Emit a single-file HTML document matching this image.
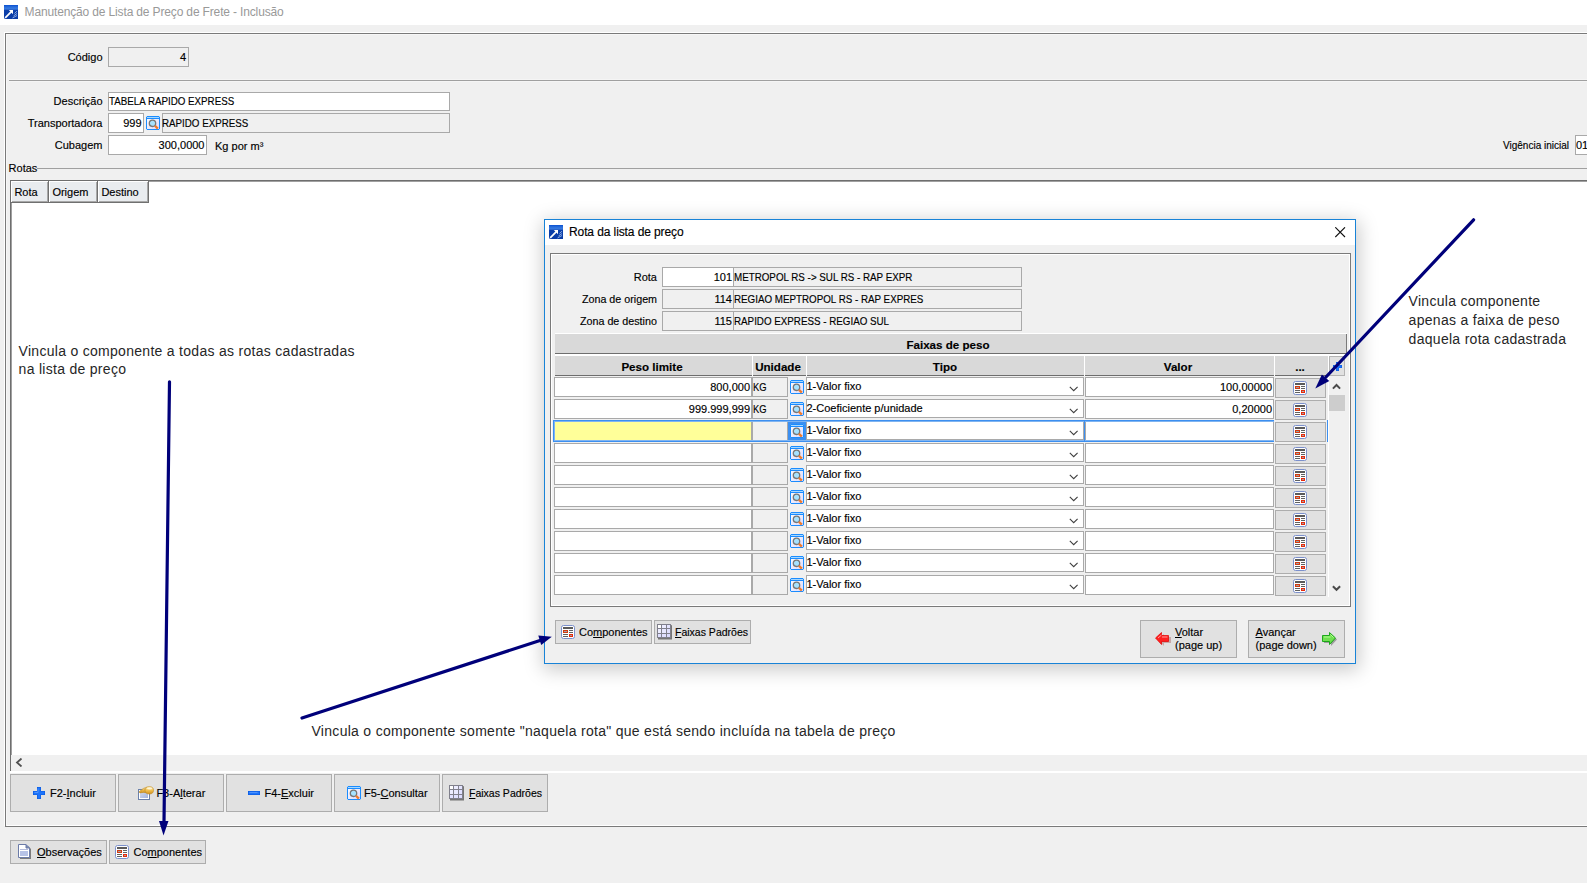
<!DOCTYPE html><html><head><meta charset="utf-8"><style>
html,body{margin:0;padding:0;}
body{width:1587px;height:883px;overflow:hidden;position:relative;background:#f0f0f0;font-family:"Liberation Sans",sans-serif;color:#000;}
div,svg{position:absolute;}
.t{white-space:pre;line-height:1;-webkit-text-stroke:0.15px currentColor;}
u{text-decoration:underline;text-underline-offset:1px;}
</style></head><body>
<div style="left:0px;top:0px;width:1587px;height:25px;background:#fff"></div>
<svg style="left:4px;top:5px" width="14" height="14" viewBox="0 0 14 14">
<defs><linearGradient id="ag1" x1="0" y1="0" x2="0" y2="1"><stop offset="0" stop-color="#0a4fd0"/><stop offset="0.15" stop-color="#2a6fdc"/><stop offset="0.3" stop-color="#3a7ae0"/><stop offset="0.36" stop-color="#0b3faa"/><stop offset="1" stop-color="#0a3ca6"/></linearGradient></defs>
<path d="M0 0 H14 V14 H1 L0 13 Z" fill="url(#ag1)"/>
<path d="M1.2 12.8 L7.6 6.4" stroke="#fff" stroke-width="1.7" fill="none"/>
<path d="M4.8 5 H9 V9.2 Z" fill="#fff"/>
<path d="M10.5 8.5 L13 6.2 M9.5 11 L13 8.5 M8.5 13 L13 10.5" stroke="#a8c4f0" stroke-width="0.9" fill="none" opacity="0.9"/>
</svg>
<div class="t" style="left:24.6px;top:5.84px;font-size:12px;color:#999;letter-spacing:-0.15px;-webkit-text-stroke:0">Manutenção de Lista de Preço de Frete - Inclusão</div>
<div style="left:5px;top:33px;width:1600px;height:794px;border:1px solid #7a7a7a;border-right:none;box-sizing:border-box;box-shadow:-1px -1px 0 #fff, inset 1px 1px 0 #f7f7f7, inset 0 -1px 0 #fff"></div>
<div class="t" style="right:1484.5px;top:51.69px;font-size:11px;">Código</div>
<div style="left:108px;top:47px;width:81px;height:20px;background:#f0f0f0;border:1px solid #a9a9a9;box-sizing:border-box"></div>
<div class="t" style="right:1401px;top:51.69px;font-size:11px;">4</div>
<div style="left:9px;top:80px;width:1600px;height:1px;background:#a0a0a0"></div>
<div style="left:9px;top:79px;width:1600px;height:1px;background:#f5f5f5"></div>
<div style="left:9px;top:81px;width:1600px;height:1px;background:#f5f5f5"></div>
<div class="t" style="right:1484.5px;top:95.69px;font-size:11px;">Descrição</div>
<div style="left:108px;top:92px;width:342px;height:19px;background:#fff;border:1px solid #a9a9a9;box-sizing:border-box"></div>
<div class="t" style="left:109px;top:95.69px;font-size:11px;;transform:scaleX(0.888);transform-origin:0 0">TABELA RAPIDO EXPRESS</div>
<div class="t" style="right:1484.5px;top:117.69px;font-size:11px;">Transportadora</div>
<div style="left:108px;top:113px;width:36px;height:20px;background:#fff;border:1px solid #a9a9a9;box-sizing:border-box"></div>
<div class="t" style="right:1445.5px;top:117.69px;font-size:11px;">999</div>
<svg style="left:146px;top:116px" width="14" height="14" viewBox="0 0 14 14">
<defs><linearGradient id="sg2" x1="0" y1="0" x2="1" y2="1"><stop offset="0" stop-color="#ffffff"/><stop offset="1" stop-color="#dcd8fa"/></linearGradient></defs>
<path d="M1 0.5 H13 L13.5 1 V13 L13 13.5 H1 L0.5 13 V1 Z" fill="url(#sg2)" stroke="#1a8cff" stroke-width="1"/>
<rect x="1" y="1" width="12" height="1" fill="#a8d8ff"/>
<rect x="1" y="2" width="12" height="1" fill="#1a8cff"/>
<circle cx="6.5" cy="7.3" r="3.2" fill="#a6e2ff" stroke="#777" stroke-width="1.3"/>
<path d="M9 9.8 L11.8 12.6" stroke="#f07a28" stroke-width="2.3"/>
</svg>
<div style="left:162px;top:113px;width:288px;height:20px;background:#f0f0f0;border:1px solid #a9a9a9;box-sizing:border-box"></div>
<div class="t" style="left:162px;top:117.69px;font-size:11px;;transform:scaleX(0.888);transform-origin:0 0">RAPIDO EXPRESS</div>
<div class="t" style="right:1484.5px;top:139.69px;font-size:11px;">Cubagem</div>
<div style="left:108px;top:135px;width:99px;height:20px;background:#fff;border:1px solid #a9a9a9;box-sizing:border-box"></div>
<div class="t" style="right:1382.5px;top:139.69px;font-size:11px;">300,0000</div>
<div class="t" style="left:215px;top:140.69px;font-size:11px;">Kg por m³</div>
<div class="t" style="left:1503px;top:139.69px;font-size:11px;;transform:scaleX(0.91);transform-origin:0 0">Vigência inicial</div>
<div style="left:1575px;top:135px;width:20px;height:20px;background:#fff;border:1px solid #a9a9a9;box-sizing:border-box"></div>
<div class="t" style="left:1576px;top:139.69px;font-size:11px;">01</div>
<div class="t" style="left:8.6px;top:162.69px;font-size:11px;">Rotas</div>
<div style="left:37px;top:168px;width:1600px;height:1px;background:#a0a0a0"></div>
<div style="left:10px;top:180px;width:1600px;height:592px;background:#fff;border-left:1px solid #6e6e6e;border-top:1px solid #6e6e6e;box-sizing:border-box;box-shadow:inset 1px 1px 0 #a0a0a0"></div>
<div style="left:11px;top:181px;width:38px;height:22px;background:#e9ecef;border-right:1px solid #707070;border-bottom:1px solid #707070;box-sizing:border-box;box-shadow:inset 1px 1px 0 #fff, inset -1px -1px 0 #a8a8a8"></div>
<div class="t" style="left:14.4px;top:186.69px;font-size:11px;">Rota</div>
<div style="left:49px;top:181px;width:49px;height:22px;background:#e9ecef;border-right:1px solid #707070;border-bottom:1px solid #707070;box-sizing:border-box;box-shadow:inset 1px 1px 0 #fff, inset -1px -1px 0 #a8a8a8"></div>
<div class="t" style="left:52.4px;top:186.69px;font-size:11px;">Origem</div>
<div style="left:98px;top:181px;width:51px;height:22px;background:#e9ecef;border-right:1px solid #707070;border-bottom:1px solid #707070;box-sizing:border-box;box-shadow:inset 1px 1px 0 #fff, inset -1px -1px 0 #a8a8a8"></div>
<div class="t" style="left:101.4px;top:186.69px;font-size:11px;">Destino</div>
<div style="left:11px;top:755px;width:1600px;height:16px;background:#f0f0f0"></div>
<svg style="left:15px;top:758px" width="8" height="9" viewBox="0 0 8 9"><path d="M6.5 0.5 L2 4.5 L6.5 8.5" stroke="#505050" stroke-width="1.8" fill="none"/></svg>
<div style="left:10px;top:771px;width:1600px;height:2px;background:#fff"></div>
<div style="left:10px;top:774px;width:106px;height:38px;background:#e1e1e1;border:1px solid #adadad;box-sizing:border-box;"></div>
<div style="left:118px;top:774px;width:106px;height:38px;background:#e1e1e1;border:1px solid #adadad;box-sizing:border-box;"></div>
<div style="left:226px;top:774px;width:106px;height:38px;background:#e1e1e1;border:1px solid #adadad;box-sizing:border-box;"></div>
<div style="left:334px;top:774px;width:106px;height:38px;background:#e1e1e1;border:1px solid #adadad;box-sizing:border-box;"></div>
<div style="left:442px;top:774px;width:106px;height:38px;background:#e1e1e1;border:1px solid #adadad;box-sizing:border-box;"></div>
<svg style="left:33px;top:787px" width="12" height="12" viewBox="0 0 12 12">
<path d="M4 0 H8 V4 H12 V8 H8 V12 H4 V8 H0 V4 H4 Z" fill="#0a5ae0"/>
<path d="M4.6 0.6 H7.4 V4.6 H11.4 V7.4 H7.4 V11.4 H4.6 V7.4 H0.6 V4.6 H4.6 Z" fill="#1e74fa"/>
<path d="M5 1.5 V5.5 H1.5" stroke="#5a9cff" stroke-width="0.8" fill="none"/>
</svg>
<div class="t" style="left:50px;top:787.69px;font-size:11px;">F2-<u>I</u>ncluir</div>
<svg style="left:138px;top:786px" width="17" height="15" viewBox="0 0 17 15">
<defs><linearGradient id="eg" x1="0" y1="0" x2="1" y2="1"><stop offset="0" stop-color="#d0daf0"/><stop offset="1" stop-color="#a4b4dc"/></linearGradient>
<linearGradient id="hg" x1="0" y1="0" x2="0" y2="1"><stop offset="0" stop-color="#fff0c0"/><stop offset="0.5" stop-color="#f0c050"/><stop offset="1" stop-color="#d09020"/></linearGradient></defs>
<rect x="0.5" y="3.5" width="11" height="10" fill="#fff" stroke="#6a80aa"/>
<rect x="2" y="6" width="8" height="6" fill="url(#eg)"/>
<path d="M9 1.2 L5.5 2.4 L1.6 5.2 Q0.6 6.4 2 6.9 L5.5 6.4 L9 6.8 Z" fill="url(#hg)" stroke="#c08a20" stroke-width="0.6"/>
<path d="M4.2 3.6 L3.4 6.2 M6.4 2.6 L5.8 6.2" stroke="#c89430" stroke-width="0.5"/>
<ellipse cx="11.3" cy="4.3" rx="4.2" ry="3.7" fill="url(#hg)" stroke="#c08a20" stroke-width="0.6"/>
<ellipse cx="11.6" cy="2.5" rx="2.6" ry="1.1" fill="#fffbe8" opacity="0.85"/>
</svg>
<div class="t" style="left:156.4px;top:787.69px;font-size:11px;">F3-A<u>l</u>terar</div>
<svg style="left:248px;top:791px" width="12" height="4" viewBox="0 0 12 4">
<rect x="0" y="0" width="12" height="4" fill="#0a5ae0"/><rect x="0.6" y="0.6" width="10.8" height="2.8" fill="#1e74fa"/><rect x="1.5" y="1" width="8" height="0.8" fill="#5a9cff"/>
</svg>
<div class="t" style="left:264.5px;top:787.69px;font-size:11px;">F4-<u>E</u>xcluir</div>
<svg style="left:347px;top:786px" width="14" height="14" viewBox="0 0 14 14">
<defs><linearGradient id="sg3" x1="0" y1="0" x2="1" y2="1"><stop offset="0" stop-color="#ffffff"/><stop offset="1" stop-color="#dcd8fa"/></linearGradient></defs>
<path d="M1 0.5 H13 L13.5 1 V13 L13 13.5 H1 L0.5 13 V1 Z" fill="url(#sg3)" stroke="#1a8cff" stroke-width="1"/>
<rect x="1" y="1" width="12" height="1" fill="#a8d8ff"/>
<rect x="1" y="2" width="12" height="1" fill="#1a8cff"/>
<circle cx="6.5" cy="7.3" r="3.2" fill="#a6e2ff" stroke="#777" stroke-width="1.3"/>
<path d="M9 9.8 L11.8 12.6" stroke="#f07a28" stroke-width="2.3"/>
</svg>
<div class="t" style="left:364px;top:787.69px;font-size:11px;">F5-<u>C</u>onsultar</div>
<svg style="left:449px;top:785px" width="16" height="16" viewBox="0 0 16 16">
<rect x="1" y="1.2" width="14" height="14.3" fill="#5a5a5a" opacity="0.8"/>
<rect x="0" y="0" width="14" height="14" fill="#80808c"/>
<rect x="1" y="1" width="3" height="3" fill="#ffffff"/><rect x="5" y="1" width="4" height="3" fill="#ececff"/><rect x="10" y="1" width="3" height="3" fill="#e4e4ff"/>
<rect x="1" y="5" width="3" height="4" fill="#ececff"/><rect x="5" y="5" width="4" height="4" fill="#e8e8ff"/><rect x="10" y="5" width="3" height="4" fill="#e0e0ff"/>
<rect x="1" y="10" width="3" height="3" fill="#e0e0ff"/><rect x="5" y="10" width="4" height="3" fill="#e0e0ff"/><rect x="10" y="10" width="3" height="3" fill="#dcdcff"/>
</svg>
<div class="t" style="left:468.5px;top:787.69px;font-size:11px;;transform:scaleX(0.955);transform-origin:0 0"><u>F</u>aixas Padrões</div>
<div style="left:10px;top:840px;width:97px;height:24px;background:#e1e1e1;border:1px solid #adadad;box-sizing:border-box;"></div>
<svg style="left:18px;top:844px" width="14" height="16" viewBox="0 0 14 16">
<path d="M2 2 H10 L13 5 V15 H2 Z" fill="#505050" opacity="0.7"/>
<path d="M0.5 0.5 H8 L11.5 4 V13.5 H0.5 Z" fill="#fff" stroke="#6b7ba8"/>
<path d="M8 0.5 V4 H11.5" fill="#7888b0" stroke="#6b7ba8"/>
<rect x="2" y="5" width="8" height="1" fill="#b4bcdc"/>
<rect x="2" y="7" width="8" height="5" fill="#b6c2e6"/>
</svg>
<div class="t" style="left:37px;top:846.69px;font-size:11px;"><u>O</u>bservações</div>
<div style="left:109px;top:840px;width:97px;height:24px;background:#e1e1e1;border:1px solid #adadad;box-sizing:border-box;"></div>
<svg style="left:115px;top:845px" width="14" height="14" viewBox="0 0 14 14">
<rect x="0.5" y="0.5" width="13" height="13" rx="2" fill="#fff" stroke="#7b90cc"/>
<rect x="2" y="2" width="10" height="2" fill="#5a5a5a"/>
<rect x="2" y="5" width="5" height="3" fill="#d23a10"/>
<rect x="3" y="6" width="3" height="1" fill="#9aa0a8"/>
<rect x="8" y="5" width="4" height="1" fill="#606060"/>
<rect x="8" y="7" width="4" height="1" fill="#606060"/>
<rect x="2" y="9" width="5" height="1" fill="#606060"/>
<rect x="2" y="11" width="5" height="1" fill="#606060"/>
<rect x="8" y="9" width="4" height="3" fill="#e82a0a"/>
<rect x="9" y="10" width="2" height="1" fill="#9aa0a8"/>
</svg>
<div class="t" style="left:133.5px;top:846.69px;font-size:11px;">Co<u>m</u>ponentes</div>
<div style="left:544px;top:219px;width:812px;height:445px;box-shadow:1px 4px 18px 2px rgba(0,0,0,0.21);background:#f0f0f0;border:1px solid #1883d7;box-sizing:border-box"></div>
<div style="left:545px;top:220px;width:810px;height:25px;background:#fff"></div>
<svg style="left:549px;top:225px" width="14" height="14" viewBox="0 0 14 14">
<defs><linearGradient id="ag4" x1="0" y1="0" x2="0" y2="1"><stop offset="0" stop-color="#0a4fd0"/><stop offset="0.15" stop-color="#2a6fdc"/><stop offset="0.3" stop-color="#3a7ae0"/><stop offset="0.36" stop-color="#0b3faa"/><stop offset="1" stop-color="#0a3ca6"/></linearGradient></defs>
<path d="M0 0 H14 V14 H1 L0 13 Z" fill="url(#ag4)"/>
<path d="M1.2 12.8 L7.6 6.4" stroke="#fff" stroke-width="1.7" fill="none"/>
<path d="M4.8 5 H9 V9.2 Z" fill="#fff"/>
<path d="M10.5 8.5 L13 6.2 M9.5 11 L13 8.5 M8.5 13 L13 10.5" stroke="#a8c4f0" stroke-width="0.9" fill="none" opacity="0.9"/>
</svg>
<div class="t" style="left:569px;top:225.84px;font-size:12px;letter-spacing:-0.1px">Rota da lista de preço</div>
<svg style="left:1335px;top:227px" width="11" height="11" viewBox="0 0 11 11"><path d="M0.3 0.3 L10 10 M10 0.3 L0.3 10" stroke="#111" stroke-width="1.1"/></svg>
<div style="left:550px;top:253px;width:801px;height:354px;border:1px solid #7a7a7a;box-sizing:border-box;box-shadow:inset 1px 1px 0 #fff, inset -1px -1px 0 #fff"></div>
<div class="t" style="right:930px;top:271.69px;font-size:11px;">Rota</div>
<div style="left:662px;top:267px;width:72px;height:20px;background:#fff;border:1px solid #a9a9a9;box-sizing:border-box"></div>
<div class="t" style="right:855px;top:271.69px;font-size:11px;">101</div>
<div style="left:733px;top:267px;width:289px;height:20px;background:#f0f0f0;border:1px solid #a9a9a9;box-sizing:border-box"></div>
<div class="t" style="left:734px;top:271.69px;font-size:11px;;transform:scaleX(0.89);transform-origin:0 0">METROPOL RS -&gt; SUL RS - RAP EXPR</div>
<div class="t" style="right:930px;top:293.69px;font-size:11px;;transform:scaleX(0.975);transform-origin:100% 0">Zona de origem</div>
<div style="left:662px;top:289px;width:72px;height:20px;background:#f0f0f0;border:1px solid #a9a9a9;box-sizing:border-box"></div>
<div class="t" style="right:855px;top:293.69px;font-size:11px;">114</div>
<div style="left:733px;top:289px;width:289px;height:20px;background:#f0f0f0;border:1px solid #a9a9a9;box-sizing:border-box"></div>
<div class="t" style="left:734px;top:293.69px;font-size:11px;;transform:scaleX(0.89);transform-origin:0 0">REGIAO MEPTROPOL RS - RAP EXPRES</div>
<div class="t" style="right:930px;top:315.69px;font-size:11px;;transform:scaleX(0.975);transform-origin:100% 0">Zona de destino</div>
<div style="left:662px;top:311px;width:72px;height:20px;background:#f0f0f0;border:1px solid #a9a9a9;box-sizing:border-box"></div>
<div class="t" style="right:855px;top:315.69px;font-size:11px;">115</div>
<div style="left:733px;top:311px;width:289px;height:20px;background:#f0f0f0;border:1px solid #a9a9a9;box-sizing:border-box"></div>
<div class="t" style="left:734px;top:315.69px;font-size:11px;;transform:scaleX(0.89);transform-origin:0 0">RAPIDO EXPRESS - REGIAO SUL</div>
<div style="left:555px;top:334px;width:792px;height:20px;background:#d9d9d9;border-bottom:1px solid #6e6e6e;border-right:1px solid #7a7a7a;box-sizing:border-box;box-shadow:0 -1px 0 #fff"></div>
<div class="t" style="left:748px;width:400px;text-align:center;top:339.18px;font-size:11.6px;font-weight:bold">Faixas de peso</div>
<div style="left:555px;top:354px;width:792px;height:2px;background:#fff"></div>
<div style="left:555px;top:356px;width:197px;height:20px;background:#d9d9d9;border-bottom:1px solid #6e6e6e;box-sizing:border-box"></div>
<div style="left:752px;top:356px;width:1px;height:20px;background:#fff"></div>
<div class="t" style="left:452.0px;width:400px;text-align:center;top:361.18px;font-size:11.6px;font-weight:bold">Peso limite</div>
<div style="left:753px;top:356px;width:53px;height:20px;background:#d9d9d9;border-bottom:1px solid #6e6e6e;box-sizing:border-box"></div>
<div style="left:806px;top:356px;width:1px;height:20px;background:#fff"></div>
<div class="t" style="left:578.0px;width:400px;text-align:center;top:361.18px;font-size:11.6px;font-weight:bold">Unidade</div>
<div style="left:807px;top:356px;width:277px;height:20px;background:#d9d9d9;border-bottom:1px solid #6e6e6e;box-sizing:border-box"></div>
<div style="left:1084px;top:356px;width:1px;height:20px;background:#fff"></div>
<div class="t" style="left:745.0px;width:400px;text-align:center;top:361.18px;font-size:11.6px;font-weight:bold">Tipo</div>
<div style="left:1085px;top:356px;width:189px;height:20px;background:#d9d9d9;border-bottom:1px solid #6e6e6e;box-sizing:border-box"></div>
<div style="left:1274px;top:356px;width:1px;height:20px;background:#fff"></div>
<div class="t" style="left:978.0px;width:400px;text-align:center;top:361.18px;font-size:11.6px;font-weight:bold">Valor</div>
<div style="left:1275px;top:356px;width:53px;height:20px;background:#d9d9d9;border-bottom:1px solid #6e6e6e;box-sizing:border-box"></div>
<div style="left:1328px;top:356px;width:1px;height:20px;background:#fff"></div>
<div class="t" style="left:1100.0px;width:400px;text-align:center;top:361.18px;font-size:11.6px;font-weight:bold">...</div>
<div style="left:1329px;top:356px;width:16px;height:20px;background:#e1e1e1;border:1px solid #b4b4b4;box-sizing:border-box"></div>
<svg style="left:1333px;top:362px" width="9" height="9" viewBox="0 0 12 12">
<path d="M4 0 H8 V4 H12 V8 H8 V12 H4 V8 H0 V4 H4 Z" fill="#0a5ae0"/>
<path d="M4.6 0.6 H7.4 V4.6 H11.4 V7.4 H7.4 V11.4 H4.6 V7.4 H0.6 V4.6 H4.6 Z" fill="#1e74fa"/>
<path d="M5 1.5 V5.5 H1.5" stroke="#5a9cff" stroke-width="0.8" fill="none"/>
</svg>
<div style="left:554px;top:377px;width:198px;height:20px;background:#fff;border:1px solid #a9a9a9;box-sizing:border-box"></div>
<div style="left:752px;top:377px;width:36px;height:20px;background:#f0f0f0;border:1px solid #a9a9a9;box-sizing:border-box"></div>
<svg style="left:790px;top:380px" width="14" height="14" viewBox="0 0 14 14">
<defs><linearGradient id="sg5" x1="0" y1="0" x2="1" y2="1"><stop offset="0" stop-color="#ffffff"/><stop offset="1" stop-color="#dcd8fa"/></linearGradient></defs>
<path d="M1 0.5 H13 L13.5 1 V13 L13 13.5 H1 L0.5 13 V1 Z" fill="url(#sg5)" stroke="#1a8cff" stroke-width="1"/>
<rect x="1" y="1" width="12" height="1" fill="#a8d8ff"/>
<rect x="1" y="2" width="12" height="1" fill="#1a8cff"/>
<circle cx="6.5" cy="7.3" r="3.2" fill="#a6e2ff" stroke="#777" stroke-width="1.3"/>
<path d="M9 9.8 L11.8 12.6" stroke="#f07a28" stroke-width="2.3"/>
</svg>
<div style="left:806px;top:377px;width:278px;height:19px;background:#fff;border:1px solid #a9a9a9;box-sizing:border-box"></div>
<div class="t" style="left:806.5px;top:380.69px;font-size:11px;">1-Valor fixo</div>
<svg style="left:1069px;top:385.5px" width="10" height="6" viewBox="0 0 10 6"><path d="M0.8 0.8 L4.7 4.7 L8.6 0.8" stroke="#404040" stroke-width="1.1" fill="none"/></svg>
<div style="left:1085px;top:377px;width:189px;height:20px;background:#fff;border:1px solid #a9a9a9;box-sizing:border-box"></div>
<div class="t" style="right:837px;top:381.69px;font-size:11px;">800,000</div>
<div class="t" style="left:752.5px;top:381.69px;font-size:11px;;transform:scaleX(0.85);transform-origin:0 0">KG</div>
<div class="t" style="right:315px;top:381.69px;font-size:11px;">100,00000</div>
<div style="left:1275px;top:378px;width:51px;height:20px;background:#e1e1e1;border:1px solid #adadad;box-sizing:border-box"></div>
<svg style="left:1293px;top:381px" width="14" height="14" viewBox="0 0 14 14">
<rect x="0.5" y="0.5" width="13" height="13" rx="2" fill="#fff" stroke="#7b90cc"/>
<rect x="2" y="2" width="10" height="2" fill="#5a5a5a"/>
<rect x="2" y="5" width="5" height="3" fill="#d23a10"/>
<rect x="3" y="6" width="3" height="1" fill="#9aa0a8"/>
<rect x="8" y="5" width="4" height="1" fill="#606060"/>
<rect x="8" y="7" width="4" height="1" fill="#606060"/>
<rect x="2" y="9" width="5" height="1" fill="#606060"/>
<rect x="2" y="11" width="5" height="1" fill="#606060"/>
<rect x="8" y="9" width="4" height="3" fill="#e82a0a"/>
<rect x="9" y="10" width="2" height="1" fill="#9aa0a8"/>
</svg>
<div style="left:554px;top:399px;width:198px;height:20px;background:#fff;border:1px solid #a9a9a9;box-sizing:border-box"></div>
<div style="left:752px;top:399px;width:36px;height:20px;background:#f0f0f0;border:1px solid #a9a9a9;box-sizing:border-box"></div>
<svg style="left:790px;top:402px" width="14" height="14" viewBox="0 0 14 14">
<defs><linearGradient id="sg6" x1="0" y1="0" x2="1" y2="1"><stop offset="0" stop-color="#ffffff"/><stop offset="1" stop-color="#dcd8fa"/></linearGradient></defs>
<path d="M1 0.5 H13 L13.5 1 V13 L13 13.5 H1 L0.5 13 V1 Z" fill="url(#sg6)" stroke="#1a8cff" stroke-width="1"/>
<rect x="1" y="1" width="12" height="1" fill="#a8d8ff"/>
<rect x="1" y="2" width="12" height="1" fill="#1a8cff"/>
<circle cx="6.5" cy="7.3" r="3.2" fill="#a6e2ff" stroke="#777" stroke-width="1.3"/>
<path d="M9 9.8 L11.8 12.6" stroke="#f07a28" stroke-width="2.3"/>
</svg>
<div style="left:806px;top:399px;width:278px;height:19px;background:#fff;border:1px solid #a9a9a9;box-sizing:border-box"></div>
<div class="t" style="left:806.5px;top:402.69px;font-size:11px;">2-Coeficiente p/unidade</div>
<svg style="left:1069px;top:407.5px" width="10" height="6" viewBox="0 0 10 6"><path d="M0.8 0.8 L4.7 4.7 L8.6 0.8" stroke="#404040" stroke-width="1.1" fill="none"/></svg>
<div style="left:1085px;top:399px;width:189px;height:20px;background:#fff;border:1px solid #a9a9a9;box-sizing:border-box"></div>
<div class="t" style="right:837px;top:403.69px;font-size:11px;">999.999,999</div>
<div class="t" style="left:752.5px;top:403.69px;font-size:11px;;transform:scaleX(0.85);transform-origin:0 0">KG</div>
<div class="t" style="right:315px;top:403.69px;font-size:11px;">0,20000</div>
<div style="left:1275px;top:400px;width:51px;height:20px;background:#e1e1e1;border:1px solid #adadad;box-sizing:border-box"></div>
<svg style="left:1293px;top:403px" width="14" height="14" viewBox="0 0 14 14">
<rect x="0.5" y="0.5" width="13" height="13" rx="2" fill="#fff" stroke="#7b90cc"/>
<rect x="2" y="2" width="10" height="2" fill="#5a5a5a"/>
<rect x="2" y="5" width="5" height="3" fill="#d23a10"/>
<rect x="3" y="6" width="3" height="1" fill="#9aa0a8"/>
<rect x="8" y="5" width="4" height="1" fill="#606060"/>
<rect x="8" y="7" width="4" height="1" fill="#606060"/>
<rect x="2" y="9" width="5" height="1" fill="#606060"/>
<rect x="2" y="11" width="5" height="1" fill="#606060"/>
<rect x="8" y="9" width="4" height="3" fill="#e82a0a"/>
<rect x="9" y="10" width="2" height="1" fill="#9aa0a8"/>
</svg>
<div style="left:554px;top:421px;width:198px;height:20px;background:#ffff99;border:1px solid #a9a9a9;box-sizing:border-box;border-color:#e8e0a0 #a9a9a9 #e8e0a0 #e8e0a0"></div>
<div style="left:752px;top:421px;width:36px;height:20px;background:#f0f0f0;border:1px solid #a9a9a9;box-sizing:border-box"></div>
<div style="left:788px;top:420px;width:18px;height:22px;background:#3c8ff0"></div>
<svg style="left:790px;top:424px" width="14" height="14" viewBox="0 0 14 14">
<defs><linearGradient id="sg7" x1="0" y1="0" x2="1" y2="1"><stop offset="0" stop-color="#ffffff"/><stop offset="1" stop-color="#dcd8fa"/></linearGradient></defs>
<path d="M1 0.5 H13 L13.5 1 V13 L13 13.5 H1 L0.5 13 V1 Z" fill="url(#sg7)" stroke="#1a8cff" stroke-width="1"/>
<rect x="1" y="1" width="12" height="1" fill="#a8d8ff"/>
<rect x="1" y="2" width="12" height="1" fill="#1a8cff"/>
<circle cx="6.5" cy="7.3" r="3.2" fill="#a6e2ff" stroke="#777" stroke-width="1.3"/>
<path d="M9 9.8 L11.8 12.6" stroke="#f07a28" stroke-width="2.3"/>
</svg>
<div style="left:806px;top:421px;width:278px;height:19px;background:#fff;border:1px solid #a9a9a9;box-sizing:border-box"></div>
<div class="t" style="left:806.5px;top:424.69px;font-size:11px;">1-Valor fixo</div>
<svg style="left:1069px;top:429.5px" width="10" height="6" viewBox="0 0 10 6"><path d="M0.8 0.8 L4.7 4.7 L8.6 0.8" stroke="#404040" stroke-width="1.1" fill="none"/></svg>
<div style="left:1085px;top:421px;width:189px;height:20px;background:#fff;border:1px solid #a9a9a9;box-sizing:border-box"></div>
<div style="left:1275px;top:422px;width:51px;height:20px;background:#e1e1e1;border:1px solid #adadad;box-sizing:border-box"></div>
<svg style="left:1293px;top:425px" width="14" height="14" viewBox="0 0 14 14">
<rect x="0.5" y="0.5" width="13" height="13" rx="2" fill="#fff" stroke="#7b90cc"/>
<rect x="2" y="2" width="10" height="2" fill="#5a5a5a"/>
<rect x="2" y="5" width="5" height="3" fill="#d23a10"/>
<rect x="3" y="6" width="3" height="1" fill="#9aa0a8"/>
<rect x="8" y="5" width="4" height="1" fill="#606060"/>
<rect x="8" y="7" width="4" height="1" fill="#606060"/>
<rect x="2" y="9" width="5" height="1" fill="#606060"/>
<rect x="2" y="11" width="5" height="1" fill="#606060"/>
<rect x="8" y="9" width="4" height="3" fill="#e82a0a"/>
<rect x="9" y="10" width="2" height="1" fill="#9aa0a8"/>
</svg>
<div style="left:553px;top:420px;width:721px;height:1px;background:#3c8ff0"></div>
<div style="left:553px;top:441px;width:721px;height:1px;background:#3c8ff0"></div>
<div style="left:554px;top:421px;width:720px;height:1px;background:#80b4f0"></div>
<div style="left:554px;top:440px;width:720px;height:1px;background:#80b4f0"></div>
<div style="left:553px;top:420px;width:1px;height:22px;background:#3c8ff0"></div>
<div style="left:554px;top:421px;width:1px;height:20px;background:#80b4f0"></div>
<div style="left:1084px;top:421px;width:1px;height:20px;background:#3c8ff0"></div>
<div style="left:1327px;top:420px;width:1px;height:22px;background:#3c8ff0"></div>
<div style="left:554px;top:443px;width:198px;height:20px;background:#fff;border:1px solid #a9a9a9;box-sizing:border-box"></div>
<div style="left:752px;top:443px;width:36px;height:20px;background:#f0f0f0;border:1px solid #a9a9a9;box-sizing:border-box"></div>
<svg style="left:790px;top:446px" width="14" height="14" viewBox="0 0 14 14">
<defs><linearGradient id="sg8" x1="0" y1="0" x2="1" y2="1"><stop offset="0" stop-color="#ffffff"/><stop offset="1" stop-color="#dcd8fa"/></linearGradient></defs>
<path d="M1 0.5 H13 L13.5 1 V13 L13 13.5 H1 L0.5 13 V1 Z" fill="url(#sg8)" stroke="#1a8cff" stroke-width="1"/>
<rect x="1" y="1" width="12" height="1" fill="#a8d8ff"/>
<rect x="1" y="2" width="12" height="1" fill="#1a8cff"/>
<circle cx="6.5" cy="7.3" r="3.2" fill="#a6e2ff" stroke="#777" stroke-width="1.3"/>
<path d="M9 9.8 L11.8 12.6" stroke="#f07a28" stroke-width="2.3"/>
</svg>
<div style="left:806px;top:443px;width:278px;height:19px;background:#fff;border:1px solid #a9a9a9;box-sizing:border-box"></div>
<div class="t" style="left:806.5px;top:446.69px;font-size:11px;">1-Valor fixo</div>
<svg style="left:1069px;top:451.5px" width="10" height="6" viewBox="0 0 10 6"><path d="M0.8 0.8 L4.7 4.7 L8.6 0.8" stroke="#404040" stroke-width="1.1" fill="none"/></svg>
<div style="left:1085px;top:443px;width:189px;height:20px;background:#fff;border:1px solid #a9a9a9;box-sizing:border-box"></div>
<div style="left:1275px;top:444px;width:51px;height:20px;background:#e1e1e1;border:1px solid #adadad;box-sizing:border-box"></div>
<svg style="left:1293px;top:447px" width="14" height="14" viewBox="0 0 14 14">
<rect x="0.5" y="0.5" width="13" height="13" rx="2" fill="#fff" stroke="#7b90cc"/>
<rect x="2" y="2" width="10" height="2" fill="#5a5a5a"/>
<rect x="2" y="5" width="5" height="3" fill="#d23a10"/>
<rect x="3" y="6" width="3" height="1" fill="#9aa0a8"/>
<rect x="8" y="5" width="4" height="1" fill="#606060"/>
<rect x="8" y="7" width="4" height="1" fill="#606060"/>
<rect x="2" y="9" width="5" height="1" fill="#606060"/>
<rect x="2" y="11" width="5" height="1" fill="#606060"/>
<rect x="8" y="9" width="4" height="3" fill="#e82a0a"/>
<rect x="9" y="10" width="2" height="1" fill="#9aa0a8"/>
</svg>
<div style="left:554px;top:465px;width:198px;height:20px;background:#fff;border:1px solid #a9a9a9;box-sizing:border-box"></div>
<div style="left:752px;top:465px;width:36px;height:20px;background:#f0f0f0;border:1px solid #a9a9a9;box-sizing:border-box"></div>
<svg style="left:790px;top:468px" width="14" height="14" viewBox="0 0 14 14">
<defs><linearGradient id="sg9" x1="0" y1="0" x2="1" y2="1"><stop offset="0" stop-color="#ffffff"/><stop offset="1" stop-color="#dcd8fa"/></linearGradient></defs>
<path d="M1 0.5 H13 L13.5 1 V13 L13 13.5 H1 L0.5 13 V1 Z" fill="url(#sg9)" stroke="#1a8cff" stroke-width="1"/>
<rect x="1" y="1" width="12" height="1" fill="#a8d8ff"/>
<rect x="1" y="2" width="12" height="1" fill="#1a8cff"/>
<circle cx="6.5" cy="7.3" r="3.2" fill="#a6e2ff" stroke="#777" stroke-width="1.3"/>
<path d="M9 9.8 L11.8 12.6" stroke="#f07a28" stroke-width="2.3"/>
</svg>
<div style="left:806px;top:465px;width:278px;height:19px;background:#fff;border:1px solid #a9a9a9;box-sizing:border-box"></div>
<div class="t" style="left:806.5px;top:468.69px;font-size:11px;">1-Valor fixo</div>
<svg style="left:1069px;top:473.5px" width="10" height="6" viewBox="0 0 10 6"><path d="M0.8 0.8 L4.7 4.7 L8.6 0.8" stroke="#404040" stroke-width="1.1" fill="none"/></svg>
<div style="left:1085px;top:465px;width:189px;height:20px;background:#fff;border:1px solid #a9a9a9;box-sizing:border-box"></div>
<div style="left:1275px;top:466px;width:51px;height:20px;background:#e1e1e1;border:1px solid #adadad;box-sizing:border-box"></div>
<svg style="left:1293px;top:469px" width="14" height="14" viewBox="0 0 14 14">
<rect x="0.5" y="0.5" width="13" height="13" rx="2" fill="#fff" stroke="#7b90cc"/>
<rect x="2" y="2" width="10" height="2" fill="#5a5a5a"/>
<rect x="2" y="5" width="5" height="3" fill="#d23a10"/>
<rect x="3" y="6" width="3" height="1" fill="#9aa0a8"/>
<rect x="8" y="5" width="4" height="1" fill="#606060"/>
<rect x="8" y="7" width="4" height="1" fill="#606060"/>
<rect x="2" y="9" width="5" height="1" fill="#606060"/>
<rect x="2" y="11" width="5" height="1" fill="#606060"/>
<rect x="8" y="9" width="4" height="3" fill="#e82a0a"/>
<rect x="9" y="10" width="2" height="1" fill="#9aa0a8"/>
</svg>
<div style="left:554px;top:487px;width:198px;height:20px;background:#fff;border:1px solid #a9a9a9;box-sizing:border-box"></div>
<div style="left:752px;top:487px;width:36px;height:20px;background:#f0f0f0;border:1px solid #a9a9a9;box-sizing:border-box"></div>
<svg style="left:790px;top:490px" width="14" height="14" viewBox="0 0 14 14">
<defs><linearGradient id="sg10" x1="0" y1="0" x2="1" y2="1"><stop offset="0" stop-color="#ffffff"/><stop offset="1" stop-color="#dcd8fa"/></linearGradient></defs>
<path d="M1 0.5 H13 L13.5 1 V13 L13 13.5 H1 L0.5 13 V1 Z" fill="url(#sg10)" stroke="#1a8cff" stroke-width="1"/>
<rect x="1" y="1" width="12" height="1" fill="#a8d8ff"/>
<rect x="1" y="2" width="12" height="1" fill="#1a8cff"/>
<circle cx="6.5" cy="7.3" r="3.2" fill="#a6e2ff" stroke="#777" stroke-width="1.3"/>
<path d="M9 9.8 L11.8 12.6" stroke="#f07a28" stroke-width="2.3"/>
</svg>
<div style="left:806px;top:487px;width:278px;height:19px;background:#fff;border:1px solid #a9a9a9;box-sizing:border-box"></div>
<div class="t" style="left:806.5px;top:490.69px;font-size:11px;">1-Valor fixo</div>
<svg style="left:1069px;top:495.5px" width="10" height="6" viewBox="0 0 10 6"><path d="M0.8 0.8 L4.7 4.7 L8.6 0.8" stroke="#404040" stroke-width="1.1" fill="none"/></svg>
<div style="left:1085px;top:487px;width:189px;height:20px;background:#fff;border:1px solid #a9a9a9;box-sizing:border-box"></div>
<div style="left:1275px;top:488px;width:51px;height:20px;background:#e1e1e1;border:1px solid #adadad;box-sizing:border-box"></div>
<svg style="left:1293px;top:491px" width="14" height="14" viewBox="0 0 14 14">
<rect x="0.5" y="0.5" width="13" height="13" rx="2" fill="#fff" stroke="#7b90cc"/>
<rect x="2" y="2" width="10" height="2" fill="#5a5a5a"/>
<rect x="2" y="5" width="5" height="3" fill="#d23a10"/>
<rect x="3" y="6" width="3" height="1" fill="#9aa0a8"/>
<rect x="8" y="5" width="4" height="1" fill="#606060"/>
<rect x="8" y="7" width="4" height="1" fill="#606060"/>
<rect x="2" y="9" width="5" height="1" fill="#606060"/>
<rect x="2" y="11" width="5" height="1" fill="#606060"/>
<rect x="8" y="9" width="4" height="3" fill="#e82a0a"/>
<rect x="9" y="10" width="2" height="1" fill="#9aa0a8"/>
</svg>
<div style="left:554px;top:509px;width:198px;height:20px;background:#fff;border:1px solid #a9a9a9;box-sizing:border-box"></div>
<div style="left:752px;top:509px;width:36px;height:20px;background:#f0f0f0;border:1px solid #a9a9a9;box-sizing:border-box"></div>
<svg style="left:790px;top:512px" width="14" height="14" viewBox="0 0 14 14">
<defs><linearGradient id="sg11" x1="0" y1="0" x2="1" y2="1"><stop offset="0" stop-color="#ffffff"/><stop offset="1" stop-color="#dcd8fa"/></linearGradient></defs>
<path d="M1 0.5 H13 L13.5 1 V13 L13 13.5 H1 L0.5 13 V1 Z" fill="url(#sg11)" stroke="#1a8cff" stroke-width="1"/>
<rect x="1" y="1" width="12" height="1" fill="#a8d8ff"/>
<rect x="1" y="2" width="12" height="1" fill="#1a8cff"/>
<circle cx="6.5" cy="7.3" r="3.2" fill="#a6e2ff" stroke="#777" stroke-width="1.3"/>
<path d="M9 9.8 L11.8 12.6" stroke="#f07a28" stroke-width="2.3"/>
</svg>
<div style="left:806px;top:509px;width:278px;height:19px;background:#fff;border:1px solid #a9a9a9;box-sizing:border-box"></div>
<div class="t" style="left:806.5px;top:512.69px;font-size:11px;">1-Valor fixo</div>
<svg style="left:1069px;top:517.5px" width="10" height="6" viewBox="0 0 10 6"><path d="M0.8 0.8 L4.7 4.7 L8.6 0.8" stroke="#404040" stroke-width="1.1" fill="none"/></svg>
<div style="left:1085px;top:509px;width:189px;height:20px;background:#fff;border:1px solid #a9a9a9;box-sizing:border-box"></div>
<div style="left:1275px;top:510px;width:51px;height:20px;background:#e1e1e1;border:1px solid #adadad;box-sizing:border-box"></div>
<svg style="left:1293px;top:513px" width="14" height="14" viewBox="0 0 14 14">
<rect x="0.5" y="0.5" width="13" height="13" rx="2" fill="#fff" stroke="#7b90cc"/>
<rect x="2" y="2" width="10" height="2" fill="#5a5a5a"/>
<rect x="2" y="5" width="5" height="3" fill="#d23a10"/>
<rect x="3" y="6" width="3" height="1" fill="#9aa0a8"/>
<rect x="8" y="5" width="4" height="1" fill="#606060"/>
<rect x="8" y="7" width="4" height="1" fill="#606060"/>
<rect x="2" y="9" width="5" height="1" fill="#606060"/>
<rect x="2" y="11" width="5" height="1" fill="#606060"/>
<rect x="8" y="9" width="4" height="3" fill="#e82a0a"/>
<rect x="9" y="10" width="2" height="1" fill="#9aa0a8"/>
</svg>
<div style="left:554px;top:531px;width:198px;height:20px;background:#fff;border:1px solid #a9a9a9;box-sizing:border-box"></div>
<div style="left:752px;top:531px;width:36px;height:20px;background:#f0f0f0;border:1px solid #a9a9a9;box-sizing:border-box"></div>
<svg style="left:790px;top:534px" width="14" height="14" viewBox="0 0 14 14">
<defs><linearGradient id="sg12" x1="0" y1="0" x2="1" y2="1"><stop offset="0" stop-color="#ffffff"/><stop offset="1" stop-color="#dcd8fa"/></linearGradient></defs>
<path d="M1 0.5 H13 L13.5 1 V13 L13 13.5 H1 L0.5 13 V1 Z" fill="url(#sg12)" stroke="#1a8cff" stroke-width="1"/>
<rect x="1" y="1" width="12" height="1" fill="#a8d8ff"/>
<rect x="1" y="2" width="12" height="1" fill="#1a8cff"/>
<circle cx="6.5" cy="7.3" r="3.2" fill="#a6e2ff" stroke="#777" stroke-width="1.3"/>
<path d="M9 9.8 L11.8 12.6" stroke="#f07a28" stroke-width="2.3"/>
</svg>
<div style="left:806px;top:531px;width:278px;height:19px;background:#fff;border:1px solid #a9a9a9;box-sizing:border-box"></div>
<div class="t" style="left:806.5px;top:534.69px;font-size:11px;">1-Valor fixo</div>
<svg style="left:1069px;top:539.5px" width="10" height="6" viewBox="0 0 10 6"><path d="M0.8 0.8 L4.7 4.7 L8.6 0.8" stroke="#404040" stroke-width="1.1" fill="none"/></svg>
<div style="left:1085px;top:531px;width:189px;height:20px;background:#fff;border:1px solid #a9a9a9;box-sizing:border-box"></div>
<div style="left:1275px;top:532px;width:51px;height:20px;background:#e1e1e1;border:1px solid #adadad;box-sizing:border-box"></div>
<svg style="left:1293px;top:535px" width="14" height="14" viewBox="0 0 14 14">
<rect x="0.5" y="0.5" width="13" height="13" rx="2" fill="#fff" stroke="#7b90cc"/>
<rect x="2" y="2" width="10" height="2" fill="#5a5a5a"/>
<rect x="2" y="5" width="5" height="3" fill="#d23a10"/>
<rect x="3" y="6" width="3" height="1" fill="#9aa0a8"/>
<rect x="8" y="5" width="4" height="1" fill="#606060"/>
<rect x="8" y="7" width="4" height="1" fill="#606060"/>
<rect x="2" y="9" width="5" height="1" fill="#606060"/>
<rect x="2" y="11" width="5" height="1" fill="#606060"/>
<rect x="8" y="9" width="4" height="3" fill="#e82a0a"/>
<rect x="9" y="10" width="2" height="1" fill="#9aa0a8"/>
</svg>
<div style="left:554px;top:553px;width:198px;height:20px;background:#fff;border:1px solid #a9a9a9;box-sizing:border-box"></div>
<div style="left:752px;top:553px;width:36px;height:20px;background:#f0f0f0;border:1px solid #a9a9a9;box-sizing:border-box"></div>
<svg style="left:790px;top:556px" width="14" height="14" viewBox="0 0 14 14">
<defs><linearGradient id="sg13" x1="0" y1="0" x2="1" y2="1"><stop offset="0" stop-color="#ffffff"/><stop offset="1" stop-color="#dcd8fa"/></linearGradient></defs>
<path d="M1 0.5 H13 L13.5 1 V13 L13 13.5 H1 L0.5 13 V1 Z" fill="url(#sg13)" stroke="#1a8cff" stroke-width="1"/>
<rect x="1" y="1" width="12" height="1" fill="#a8d8ff"/>
<rect x="1" y="2" width="12" height="1" fill="#1a8cff"/>
<circle cx="6.5" cy="7.3" r="3.2" fill="#a6e2ff" stroke="#777" stroke-width="1.3"/>
<path d="M9 9.8 L11.8 12.6" stroke="#f07a28" stroke-width="2.3"/>
</svg>
<div style="left:806px;top:553px;width:278px;height:19px;background:#fff;border:1px solid #a9a9a9;box-sizing:border-box"></div>
<div class="t" style="left:806.5px;top:556.69px;font-size:11px;">1-Valor fixo</div>
<svg style="left:1069px;top:561.5px" width="10" height="6" viewBox="0 0 10 6"><path d="M0.8 0.8 L4.7 4.7 L8.6 0.8" stroke="#404040" stroke-width="1.1" fill="none"/></svg>
<div style="left:1085px;top:553px;width:189px;height:20px;background:#fff;border:1px solid #a9a9a9;box-sizing:border-box"></div>
<div style="left:1275px;top:554px;width:51px;height:20px;background:#e1e1e1;border:1px solid #adadad;box-sizing:border-box"></div>
<svg style="left:1293px;top:557px" width="14" height="14" viewBox="0 0 14 14">
<rect x="0.5" y="0.5" width="13" height="13" rx="2" fill="#fff" stroke="#7b90cc"/>
<rect x="2" y="2" width="10" height="2" fill="#5a5a5a"/>
<rect x="2" y="5" width="5" height="3" fill="#d23a10"/>
<rect x="3" y="6" width="3" height="1" fill="#9aa0a8"/>
<rect x="8" y="5" width="4" height="1" fill="#606060"/>
<rect x="8" y="7" width="4" height="1" fill="#606060"/>
<rect x="2" y="9" width="5" height="1" fill="#606060"/>
<rect x="2" y="11" width="5" height="1" fill="#606060"/>
<rect x="8" y="9" width="4" height="3" fill="#e82a0a"/>
<rect x="9" y="10" width="2" height="1" fill="#9aa0a8"/>
</svg>
<div style="left:554px;top:575px;width:198px;height:20px;background:#fff;border:1px solid #a9a9a9;box-sizing:border-box"></div>
<div style="left:752px;top:575px;width:36px;height:20px;background:#f0f0f0;border:1px solid #a9a9a9;box-sizing:border-box"></div>
<svg style="left:790px;top:578px" width="14" height="14" viewBox="0 0 14 14">
<defs><linearGradient id="sg14" x1="0" y1="0" x2="1" y2="1"><stop offset="0" stop-color="#ffffff"/><stop offset="1" stop-color="#dcd8fa"/></linearGradient></defs>
<path d="M1 0.5 H13 L13.5 1 V13 L13 13.5 H1 L0.5 13 V1 Z" fill="url(#sg14)" stroke="#1a8cff" stroke-width="1"/>
<rect x="1" y="1" width="12" height="1" fill="#a8d8ff"/>
<rect x="1" y="2" width="12" height="1" fill="#1a8cff"/>
<circle cx="6.5" cy="7.3" r="3.2" fill="#a6e2ff" stroke="#777" stroke-width="1.3"/>
<path d="M9 9.8 L11.8 12.6" stroke="#f07a28" stroke-width="2.3"/>
</svg>
<div style="left:806px;top:575px;width:278px;height:19px;background:#fff;border:1px solid #a9a9a9;box-sizing:border-box"></div>
<div class="t" style="left:806.5px;top:578.69px;font-size:11px;">1-Valor fixo</div>
<svg style="left:1069px;top:583.5px" width="10" height="6" viewBox="0 0 10 6"><path d="M0.8 0.8 L4.7 4.7 L8.6 0.8" stroke="#404040" stroke-width="1.1" fill="none"/></svg>
<div style="left:1085px;top:575px;width:189px;height:20px;background:#fff;border:1px solid #a9a9a9;box-sizing:border-box"></div>
<div style="left:1275px;top:576px;width:51px;height:20px;background:#e1e1e1;border:1px solid #adadad;box-sizing:border-box"></div>
<svg style="left:1293px;top:579px" width="14" height="14" viewBox="0 0 14 14">
<rect x="0.5" y="0.5" width="13" height="13" rx="2" fill="#fff" stroke="#7b90cc"/>
<rect x="2" y="2" width="10" height="2" fill="#5a5a5a"/>
<rect x="2" y="5" width="5" height="3" fill="#d23a10"/>
<rect x="3" y="6" width="3" height="1" fill="#9aa0a8"/>
<rect x="8" y="5" width="4" height="1" fill="#606060"/>
<rect x="8" y="7" width="4" height="1" fill="#606060"/>
<rect x="2" y="9" width="5" height="1" fill="#606060"/>
<rect x="2" y="11" width="5" height="1" fill="#606060"/>
<rect x="8" y="9" width="4" height="3" fill="#e82a0a"/>
<rect x="9" y="10" width="2" height="1" fill="#9aa0a8"/>
</svg>
<div style="left:1328px;top:377px;width:1px;height:220px;background:#fff"></div>
<svg style="left:1332px;top:383px" width="9" height="7" viewBox="0 0 9 7"><path d="M0.9 5.6 L4.5 2 L8.1 5.6" stroke="#4a4a4a" stroke-width="2" fill="none"/></svg>
<div style="left:1329px;top:395px;width:16px;height:16px;background:#cdcdcd"></div>
<svg style="left:1332px;top:584.5px" width="9" height="7" viewBox="0 0 9 7"><path d="M0.9 1.2 L4.5 4.8 L8.1 1.2" stroke="#4a4a4a" stroke-width="2" fill="none"/></svg>
<div style="left:555px;top:620px;width:97px;height:24px;background:#e1e1e1;border:1px solid #adadad;box-sizing:border-box;"></div>
<svg style="left:561px;top:625px" width="14" height="14" viewBox="0 0 14 14">
<rect x="0.5" y="0.5" width="13" height="13" rx="2" fill="#fff" stroke="#7b90cc"/>
<rect x="2" y="2" width="10" height="2" fill="#5a5a5a"/>
<rect x="2" y="5" width="5" height="3" fill="#d23a10"/>
<rect x="3" y="6" width="3" height="1" fill="#9aa0a8"/>
<rect x="8" y="5" width="4" height="1" fill="#606060"/>
<rect x="8" y="7" width="4" height="1" fill="#606060"/>
<rect x="2" y="9" width="5" height="1" fill="#606060"/>
<rect x="2" y="11" width="5" height="1" fill="#606060"/>
<rect x="8" y="9" width="4" height="3" fill="#e82a0a"/>
<rect x="9" y="10" width="2" height="1" fill="#9aa0a8"/>
</svg>
<div class="t" style="left:579px;top:626.69px;font-size:11px;">Co<u>m</u>ponentes</div>
<div style="left:654px;top:620px;width:97px;height:24px;background:#e1e1e1;border:1px solid #adadad;box-sizing:border-box;"></div>
<svg style="left:657px;top:624px" width="16" height="16" viewBox="0 0 16 16">
<rect x="1" y="1.2" width="14" height="14.3" fill="#5a5a5a" opacity="0.8"/>
<rect x="0" y="0" width="14" height="14" fill="#80808c"/>
<rect x="1" y="1" width="3" height="3" fill="#ffffff"/><rect x="5" y="1" width="4" height="3" fill="#ececff"/><rect x="10" y="1" width="3" height="3" fill="#e4e4ff"/>
<rect x="1" y="5" width="3" height="4" fill="#ececff"/><rect x="5" y="5" width="4" height="4" fill="#e8e8ff"/><rect x="10" y="5" width="3" height="4" fill="#e0e0ff"/>
<rect x="1" y="10" width="3" height="3" fill="#e0e0ff"/><rect x="5" y="10" width="4" height="3" fill="#e0e0ff"/><rect x="10" y="10" width="3" height="3" fill="#dcdcff"/>
</svg>
<div class="t" style="left:675px;top:626.69px;font-size:11px;;transform:scaleX(0.955);transform-origin:0 0"><u>F</u>aixas Padrões</div>
<div style="left:1140px;top:620px;width:97px;height:38px;background:#e1e1e1;border:1px solid #adadad;box-sizing:border-box;"></div>
<svg style="left:1155px;top:631.5px" width="16" height="15" viewBox="0 0 16 15">
<path d="M2 6.5 L8 1 V4 H15 V10 H8 V13 Z" fill="#800000" opacity="0.25" transform="translate(1,1)"/>
<path d="M0.5 6 L6.5 0.5 V3.5 H13.5 V9.5 H6.5 V12.5 Z" fill="#ff2020" stroke="#e00000" stroke-width="0.7"/>
<path d="M3 6 L6.5 3 M7 5 H12.5" stroke="#ff9a9a" stroke-width="1" fill="none"/>
</svg>
<div class="t" style="left:1175px;top:626.69px;font-size:11px;"><u>V</u>oltar</div>
<div class="t" style="left:1175px;top:640.19px;font-size:11px;">(page up)</div>
<div style="left:1248px;top:620px;width:97px;height:38px;background:#e1e1e1;border:1px solid #adadad;box-sizing:border-box;"></div>
<div class="t" style="left:1255.5px;top:626.69px;font-size:11px;"><u>A</u>vançar</div>
<div class="t" style="left:1255.5px;top:640.19px;font-size:11px;">(page down)</div>
<svg style="left:1322px;top:631.5px" width="16" height="15" viewBox="0 0 16 15">
<path d="M14 6.5 L8 1 V4 H1 V10 H8 V13 Z" fill="#202020" opacity="0.35" transform="translate(1,1)"/>
<path d="M13.5 6 L7.5 0.5 V3.5 H0.5 V9.5 H7.5 V12.5 Z" fill="#70e050" stroke="#10a010" stroke-width="0.9"/>
<path d="M2 5 H8.5 M8.5 2.5 L11.5 5.5" stroke="#b0ff90" stroke-width="1" fill="none"/>
</svg>
<div class="t" style="left:18.6px;top:343.55px;font-size:14px;font-size:14px;letter-spacing:0.29px;color:#262626;-webkit-text-stroke:0">Vincula o componente a todas as rotas cadastradas</div>
<div class="t" style="left:18.6px;top:362.35px;font-size:14px;font-size:14px;letter-spacing:0.29px;color:#262626;-webkit-text-stroke:0">na lista de preço</div>
<div class="t" style="left:1408.6px;top:294.15px;font-size:14px;font-size:14px;letter-spacing:0.29px;color:#262626;-webkit-text-stroke:0">Vincula componente</div>
<div class="t" style="left:1408.6px;top:313.15px;font-size:14px;font-size:14px;letter-spacing:0.29px;color:#262626;-webkit-text-stroke:0">apenas a faixa de peso</div>
<div class="t" style="left:1408.6px;top:332.15px;font-size:14px;font-size:14px;letter-spacing:0.29px;color:#262626;-webkit-text-stroke:0">daquela rota cadastrada</div>
<div class="t" style="left:311.5px;top:724.15px;font-size:14px;font-size:14px;letter-spacing:0.29px;color:#262626;-webkit-text-stroke:0">Vincula o componente somente "naquela rota" que está sendo incluída na tabela de preço</div>
<svg style="left:0;top:0" width="1587" height="883" viewBox="0 0 1587 883">
<g stroke="#00007a" stroke-width="3.2" stroke-linecap="round" fill="none">
<line x1="169.5" y1="381.8" x2="164" y2="822"/>
<line x1="302" y1="718" x2="540" y2="640.5"/>
<line x1="1473.6" y1="219.8" x2="1326" y2="377"/>
</g>
<g fill="#00007a">
<path d="M159 821 L168.5 821 L163.5 835.5 Z"/>
<path d="M551.8 636.8 L538.3 635.6 L541.2 645 Z"/>
<path d="M1315.3 388.6 L1321.9 374.5 L1329.3 380.9 Z"/>
</g>
</svg>
</body></html>
